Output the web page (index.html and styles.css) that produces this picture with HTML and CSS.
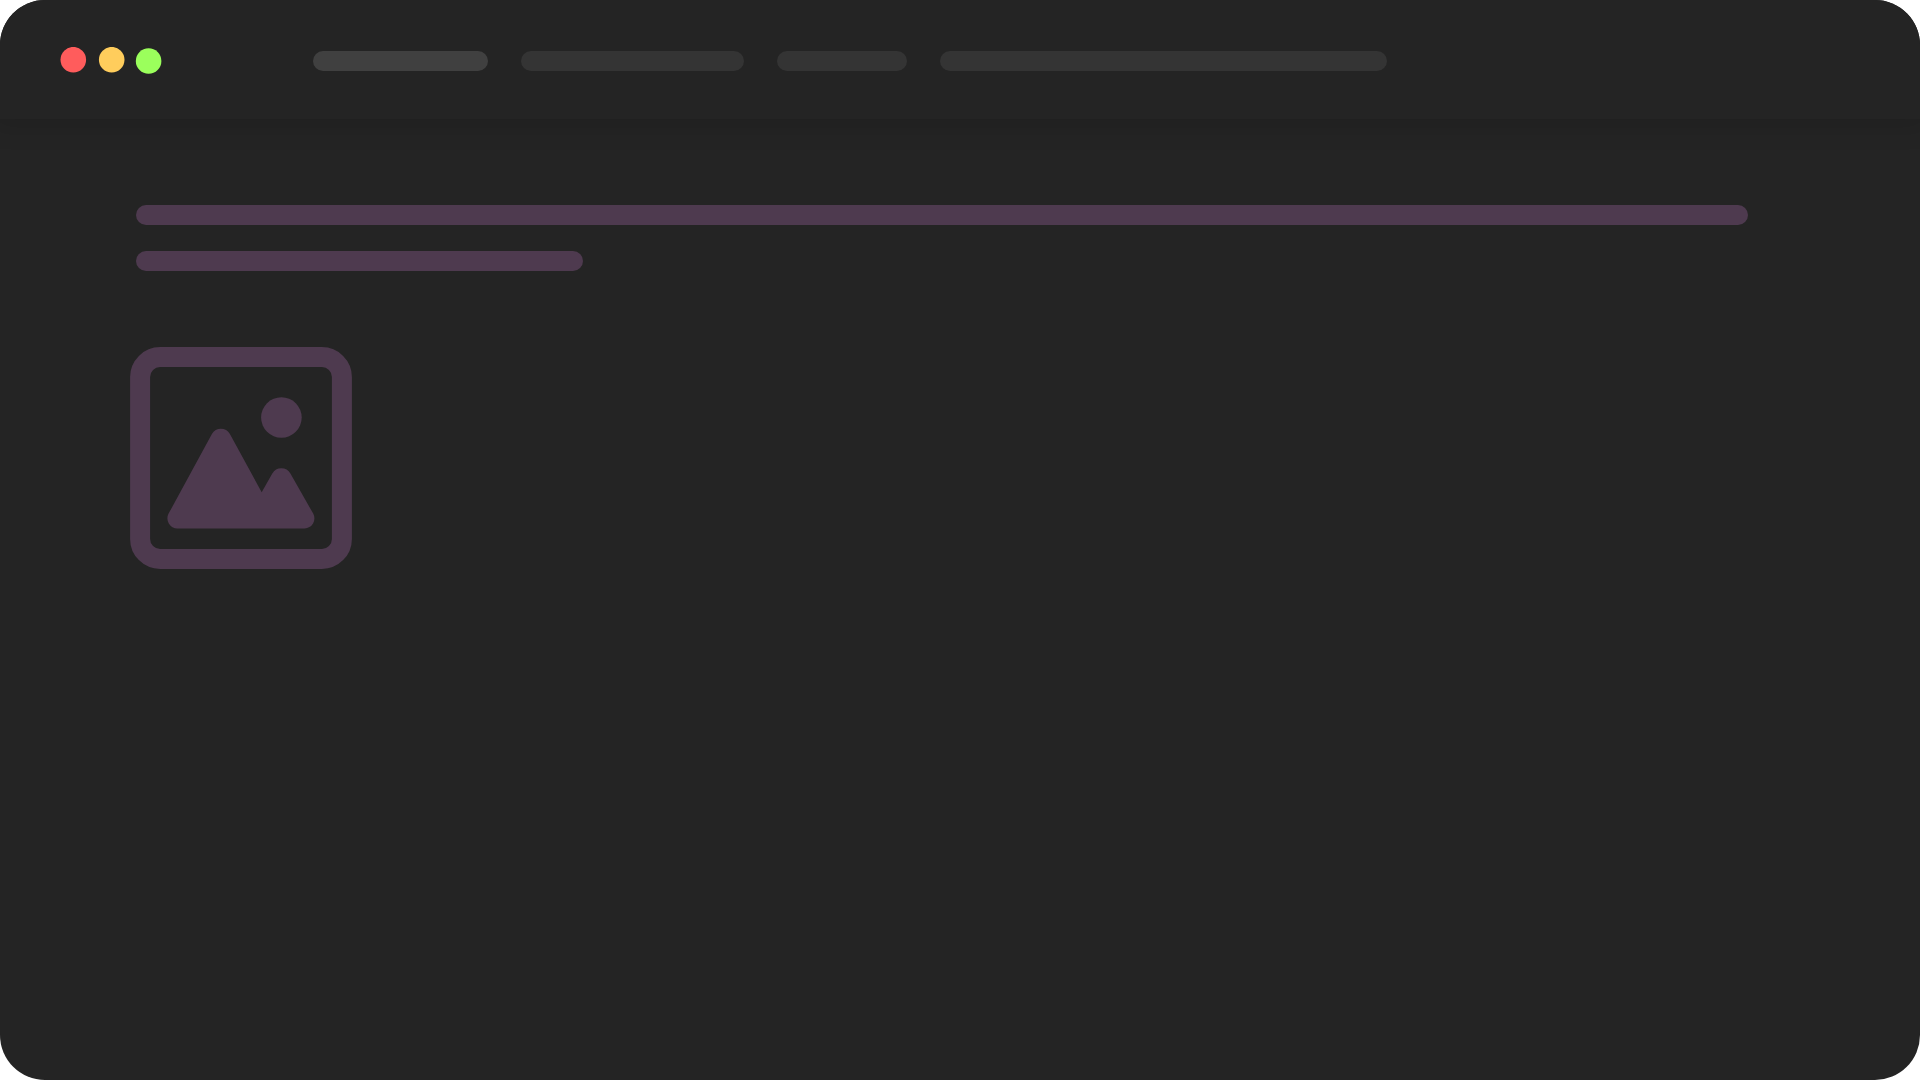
FILE: index.html
```html
<!DOCTYPE html>
<html lang="en">
<head>
  <meta charset="utf-8">
  <meta name="viewport" content="width=device-width, initial-scale=1">
  <link rel="stylesheet" href="styles.css">
</head>
<body>
  <div class="window">
    <header class="toolbar">
      <svg class="lights" viewBox="0 0 102 28" aria-hidden="true">
        <circle class="light-close" cx="13.3" cy="12.7" r="12.8"/>
        <circle class="light-minimize" cx="51.7" cy="12.7" r="12.8"/>
        <circle class="light-zoom" cx="88.6" cy="14" r="12.8"/>
      </svg>
      <div class="tabs">
        <span class="bar tab tab-small tab-active"></span>
        <span class="bar tab tab-medium"></span>
        <span class="bar tab tab-tiny"></span>
        <span class="bar tab tab-large"></span>
      </div>
    </header>
    <main class="content">
      <div class="lines">
        <span class="bar line"></span>
        <span class="bar line line-short"></span>
      </div>
      <svg class="picture" viewBox="0 0 222 222" aria-hidden="true">
        <rect class="picture-frame" x="10.1" y="10.1" width="201.8" height="201.8" rx="20"/>
        <circle cx="151.4" cy="70.5" r="20.3"/>
        <path d="M81.9 86.9A10.4 10.4 0 0 1 99.9 86.9L131.7 145.3L142.3 126.6A10.4 10.4 0 0 1 160.4 126.6L183.2 166.6A10.1 10.1 0 0 1 174.6 181.5H47.4A10.1 10.1 0 0 1 38.6 166.6Z"/>
      </svg>
    </main>
  </div>
</body>
</html>
```
FILE: styles.css
```css
body {
  margin: 0;
  background: #fff;
  font-family: "Liberation Sans", sans-serif;
}

.window {
  display: flex;
  flex-direction: column;
  min-height: 100vh;
  overflow: hidden;
  border-radius: 45px;
  background: #242424;
}

.toolbar {
  display: flex;
  align-items: center;
  gap: 151px;
  box-sizing: border-box;
  height: 119px;
  padding: 3px 60px 0;
  background: #242424;
  box-shadow: 0 0 24px 8px rgba(0, 0, 0, 0.12);
}

.lights {
  flex: none;
  width: 102px;
  height: 28px;
}

.light-close {
  fill: #ff5c5c;
}

.light-minimize {
  fill: #ffcd5c;
}

.light-zoom {
  fill: #9bff5c;
}

.tabs {
  display: flex;
  gap: 33px;
}

.bar {
  display: block;
  height: 20px;
  border-radius: 10px;
}

.tab {
  background: #343434;
}

.tab-active {
  background: #404040;
}

.tab-small {
  width: 175px;
}

.tab-medium {
  width: 223px;
}

.tab-tiny {
  width: 130px;
}

.tab-large {
  width: 447px;
}

.content {
  padding: 86px 172px 86px 130px;
}

.lines {
  display: flex;
  flex-direction: column;
  gap: 26px;
  padding-left: 6px;
}

.line {
  background: #4e3a4f;
}

.line-short {
  width: 447px;
}

.picture {
  display: block;
  width: 222px;
  height: 222px;
  margin-top: 76px;
  fill: #4e3a4f;
}

.picture-frame {
  fill: none;
  stroke: #4e3a4f;
  stroke-width: 20px;
}
```
